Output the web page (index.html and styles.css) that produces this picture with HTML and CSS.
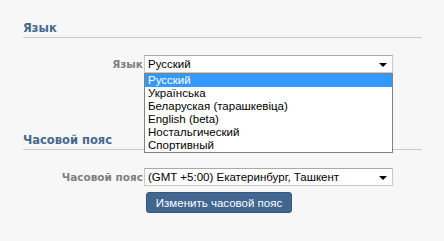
FILE: index.html
```html
<!DOCTYPE html>
<html lang="ru">
<head>
  <meta charset="UTF-8">
  <title>Настройки</title>
  <link rel="stylesheet" href="styles.css">
</head>
<body>
  <div class="settings">
    <!-- Language -->
    <section class="block">
      <h2 class="block-title">Язык</h2>
      <div class="row">
        <label class="row-label">Язык</label>
        <div class="select open">
          <span class="select-value">Русский</span>
          <span class="select-arrow"></span>
          <ul class="select-list">
            <li class="active">Русский</li>
            <li>Українська</li>
            <li>Беларуская (тарашкевіца)</li>
            <li>English (beta)</li>
            <li>Ностальгический</li>
            <li>Спортивный</li>
          </ul>
        </div>
      </div>
    </section>

    <!-- Timezone -->
    <section class="block tz">
      <h2 class="block-title">Часовой пояс</h2>
      <div class="row">
        <label class="row-label">Часовой пояс</label>
        <div class="select">
          <span class="select-value">(GMT +5:00) Екатеринбург, Ташкент</span>
          <span class="select-arrow"></span>
        </div>
      </div>
      <div class="row">
        <span class="row-label"></span>
        <button class="btn">Изменить часовой пояс</button>
      </div>
    </section>
  </div>
</body>
</html>
```

FILE: styles.css
```css
/* Base */
* { box-sizing: border-box; margin: 0; padding: 0; }
body {
  font-family: "Liberation Sans", Arial, sans-serif;
  font-size: 11.5px;
  background: #f7f7f7;
  color: #000;
}
/* Blocks */
.settings { width: 399px; margin-left: 23px; padding-top: 20px; }
.block-title {
  font-family: "DejaVu Sans", sans-serif;
  font-size: 11.5px;
  font-weight: bold;
  color: #45688e;
  height: 18px;
  padding-top: 1px;
  border-bottom: 1px solid #c5ccd6;
}
.tz { margin-top: 59px; }
/* Rows */
.row { display: flex; align-items: center; margin-top: 17px; }
.tz .row { margin-top: 18px; }
.tz .row + .row { margin-top: 6px; }
.row-label {
  width: 121px;
  text-align: right;
  font-family: "DejaVu Sans", sans-serif;
  font-size: 10.5px;
  font-weight: bold;
  color: #808080;
  padding-right: 1px;
}
/* Fake select */
.select {
  position: relative;
  width: 249px;
  height: 18px;
  background: #fff;
  border: 1px solid #c9c9c9;
  border-top-color: #a9a9a9;
  display: flex;
  align-items: center;
  padding-left: 3px;
}
.select-arrow {
  position: absolute;
  right: 5px;
  top: 7px;
  border-left: 4px solid transparent;
  border-right: 4px solid transparent;
  border-top: 4px solid #000;
}
.select-list {
  position: absolute;
  left: -1px;
  top: 17px;
  width: 249px;
  list-style: none;
  background: #fff;
  border: 1px solid #828282;
}
.select-list li { height: 13px; line-height: 13px; padding-left: 3px; }
.select-list li.active { background: #3399ff; color: #fff; }
/* Button */
.btn {
  font-family: inherit;
  font-size: 11.5px;
  color: #fff;
  background: #416690;
  border: 1px solid #35577e;
  border-radius: 3px;
  width: 146px;
  height: 21px;
  margin-left: 2px;
}
```
